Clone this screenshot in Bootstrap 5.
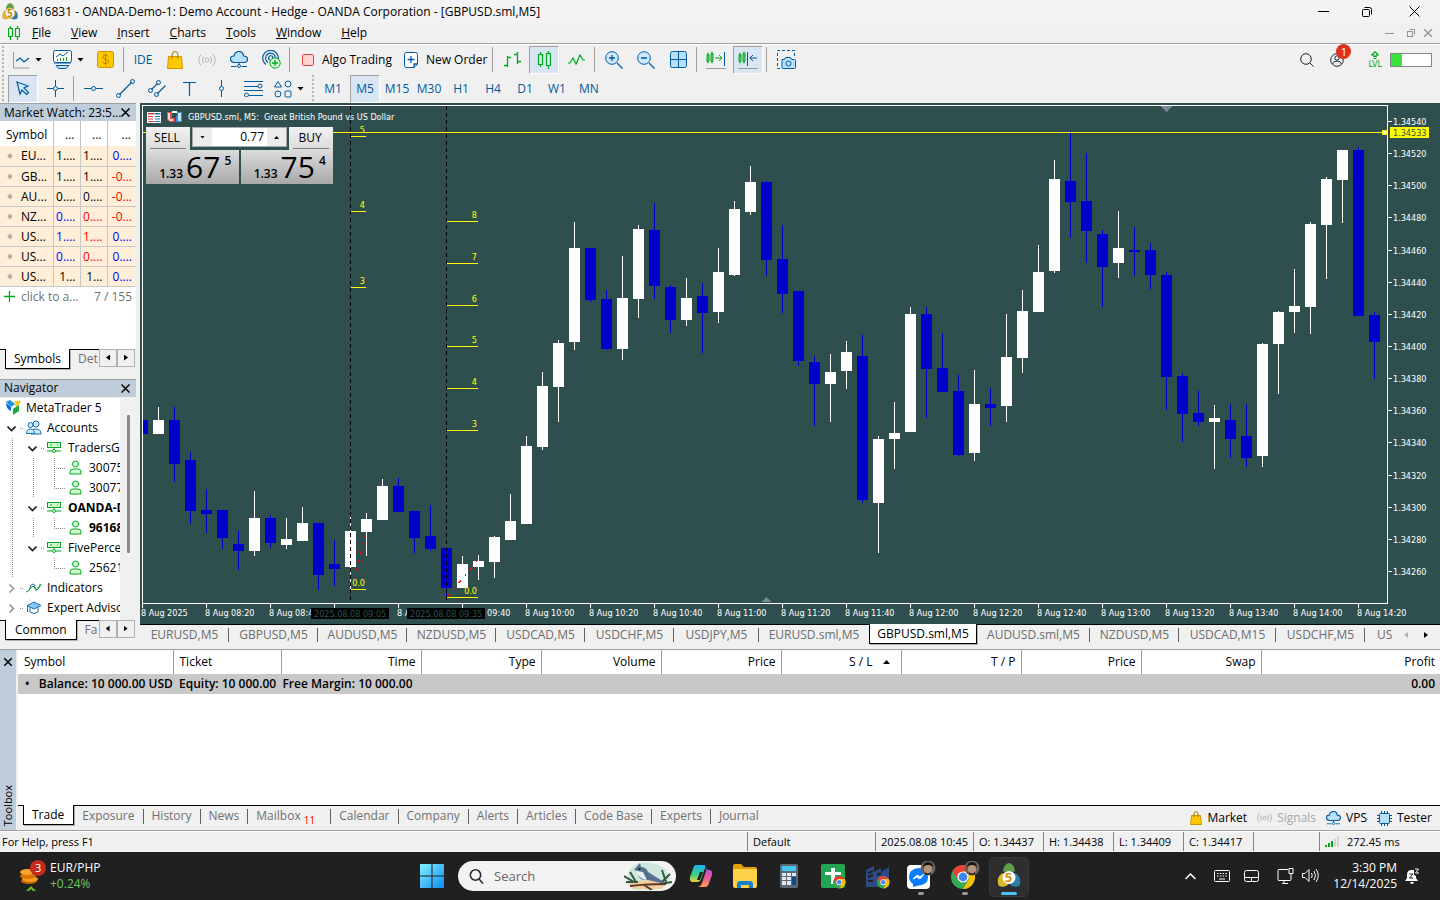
<!DOCTYPE html>
<html lang="en">
<head>
<meta charset="utf-8">
<meta name="viewport" content="width=device-width, initial-scale=1">
<title>9616831 - OANDA-Demo-1: Demo Account</title>
<link href="https://cdn.jsdelivr.net/npm/bootstrap@5.3.0/dist/css/bootstrap.min.css" rel="stylesheet">
<style>
:root{--ink:#005a9e;--grn:#00a81c;--ui:#f0f0f0;--rule:#a0a0a0;--pane:#bfcddb;--chart:#2f4f4f}
body{font:12px/16px "Open Sans","Noto Sans",sans-serif;color:#000;background:var(--ui);overflow:hidden}
button{border:0;background:none;padding:0;color:inherit;white-space:nowrap}
a{color:inherit;text-decoration:none}
svg{display:block;flex:none;fill:none}
svg:not([stroke]){stroke:currentColor}
.app{height:100vh;min-height:700px}
.titlebar{height:23px;background:#f3f3f3}
.menubar{height:20px}
.menubar .menus{gap:20px}
.toolbars{border-top:1px solid var(--rule);box-shadow:inset 0 1px #fff;color:var(--ink);height:60px;padding-top:1px}
.toolrow{height:29px}
.grip{width:2px;height:27px;background:repeating-linear-gradient(#b4b4b4 0 2px,transparent 2px 4px);margin:0 3px 0 2px}
.tb{width:32px;height:28px;display:flex;align-items:center;justify-content:center}
.tb.drop{width:41px;justify-content:flex-start;gap:5px;padding-left:5px}
.tb.pressed{width:30px;margin:0 1px;background:#d9e5f3;border:1px solid;border-color:var(--rule) #fff #fff var(--rule)}
.tb.label{width:auto;gap:8px;color:#000;padding:0 3px 0 9px}
.caret{width:7px;height:4px;background:#000;clip-path:polygon(0 0,100% 0,50% 100%)}
.vsep{width:1px;height:25px;background:var(--rule);margin:0 3px 0 2px}
.note{position:absolute;left:6px;top:-9px;width:15px;height:15px;border-radius:50%;background:#e0301e;color:#fff;font-size:11px;line-height:15px;text-align:center}
.meter{width:42px;height:14px;border:1px solid #848484;background:linear-gradient(90deg,#3ee23e 11px,#fff 11px)}
.side{width:136px;margin-right:4px}
.pane-head{height:18px;border-top:1px solid var(--rule);background:var(--pane);padding:0 6px 0 4px;white-space:nowrap}
.pane-head button{margin-left:-4px}
.watch{table-layout:fixed;width:136px;background:#fff;border-collapse:collapse}
.watch th{height:25px;font-weight:400;border-left:1px solid #c0c0c0;padding:3px 5px 0 0;text-align:right}
.watch td{height:20px;padding:0 4px 0 0;background:#ffeed8;border:1px solid #c8c8c8;border-width:0 0 1px 1px;text-align:right;line-height:19px}
.watch tr>:first-child{border-left:0;text-align:left;padding-left:6px}
.watch tr>td:first-child{padding-left:21px;background:radial-gradient(circle at 10px 10px,#a0a0a0 1px,transparent 3px) #ffeed8}
.up{color:#00f}.dn{color:#f00}
.bottomtabs{height:22px;padding-left:5px}
.btab{height:20px;line-height:18px;border-top:1px solid #000;color:#707070}
.btab.on{background:#fff;color:#000;border:1px solid #000;border-top:0;box-shadow:1px 1px #b0b0b0;line-height:20px}
.lead-line{border-top:1px solid #000;width:5px;height:1px;margin-left:-5px}
.arrowbtn{width:18px;height:18px;border:1px solid #b0b0b0;display:flex;align-items:center;justify-content:center}
.tri-l,.tri-r{width:4px;height:6px;background:#000;clip-path:polygon(100% 0,100% 100%,0 50%)}
.tri-r{clip-path:polygon(0 0,100% 50%,0 100%)}
.tree{width:120px;overflow:hidden;background:#fff;padding-left:2px;min-height:0}
.node{height:20px;white-space:nowrap}
.cell{width:21px;height:20px;flex:none;position:relative}
.cell.v{background:repeating-linear-gradient(#909090 0 1px,transparent 1px 2px) 10px 0/1px 100% no-repeat}
.cell.t{background:repeating-linear-gradient(#909090 0 1px,transparent 1px 2px) 10px 0/1px 100% no-repeat,repeating-linear-gradient(90deg,#909090 0 1px,transparent 1px 2px) 10px 10px/100% 1px no-repeat}
.cell.e{background:repeating-linear-gradient(#909090 0 1px,transparent 1px 2px) 10px 0/1px 10px no-repeat,repeating-linear-gradient(90deg,#909090 0 1px,transparent 1px 2px) 10px 10px/100% 1px no-repeat}
.cell.k{background:repeating-linear-gradient(90deg,#909090 0 1px,transparent 1px 2px) 18px 10px/3px 1px no-repeat}
.slot{width:24px;flex:none;padding-left:3px}
.thumb{width:3px;height:138px;margin:17px 0 0 7px;background:#8a8a8a;border-radius:1px}
.chartpane{background:var(--chart);padding:2px 0 0 2px}
.plot{border:1px solid #fff}
.plot>svg,.axis svg,.times svg{position:absolute;left:0;top:0;width:100%;height:100%;overflow:visible}
.axis{width:52px}
.times{height:20px;margin-right:52px}
.tiny{font:9px/12px "DejaVu Sans Condensed","DejaVu Sans",sans-serif}
svg text{stroke:none;font:9px "DejaVu Sans Condensed","DejaVu Sans",sans-serif}
.caption{position:absolute;left:4px;top:5px;color:#fff;gap:6px}
.deal{position:absolute;left:3px;top:21px;width:187px;background:var(--chart)}
.deal .side-btn{width:44px;height:23px;background:linear-gradient(#f2f2f2,#dadada);position:relative;padding:0 2px 2px 0}
.deal .side-btn::after{content:"";position:absolute;left:4px;right:4px;bottom:1px;height:1px;background:#808080}
.deal .px{height:34px;background:linear-gradient(#dcdcdc,#a8a8a8);display:flex;justify-content:center;align-items:flex-end;line-height:1;padding:0 0 4px 6px}
.deal .px b{font-size:12px;font-weight:600;margin-right:3px}
.deal .px big{font-size:30px;line-height:27px}
.deal .px sup{font-size:12px;font-weight:600;align-self:flex-start;top:5px;margin-left:4px;line-height:12px}
.spin{height:20px;width:95px;border:1px solid #a8a8a8;background:#fff;margin:0 2px}
.spin button{width:19px;background:#ececec;display:flex;align-items:center;justify-content:center}
.spin .caret{width:5px;height:3px}
.spin input{flex:1;min-width:0;border:0;padding:0 3px;text-align:right;outline:0;font-size:12px}
.charttabs{height:25px;border-top:1px solid #000;color:#6d6d6d}
.ct{width:89px;height:20px;text-align:center;position:relative;flex:none;line-height:20px}
.ct::after{content:"";position:absolute;right:0;top:3px;height:14px;border-right:1px solid #606060}
.ct.w85{width:85px}.ct.w97{width:97px}.ct.w110{width:110px}.ct.w113{width:113px}
.ct.on{width:108px;background:#fff;color:#000;border:1px solid #000;border-top:0;margin-top:-1px;box-shadow:1px 1px #b0b0b0}
.ct.on::after,.ct.w110::after{display:none}
.toolbox{height:182px;border:1px solid var(--rule);border-width:1px 0}
.boxhead{width:16px;margin-right:2px;background:var(--pane)}
.boxhead span{writing-mode:vertical-rl;transform:rotate(180deg);font-size:11px}
.trades{table-layout:fixed;width:100%;border-collapse:collapse}
.trades th{font-weight:400;height:24px;border-left:1px solid var(--rule);text-align:right;padding:0 5px 0 6px}
.trades th.s{text-align:left}.trades th:first-child{border-left:0}
.trades td{height:20px;background:#c8c8c8;font-weight:600;padding:0 5px 0 7px}
.boxtabs{height:25px;border-top:1px solid #000;color:#707070;padding-left:5px}
.xt{padding:0 9px 0 8px;height:20px;line-height:18px;position:relative}
.xt+.xt:not(:last-of-type)::after{content:"";position:absolute;right:0;top:3px;height:15px;border-right:1px solid #606060}
.xt.on{background:#fff;color:#000;border:1px solid #000;border-top:0;margin-top:-1px;line-height:20px;box-shadow:1px 1px #b0b0b0}
.services{gap:10px;color:#000;padding-right:8px}
.services a{gap:5px}
.statusbar{height:21px;font-size:11px;box-shadow:inset 0 1px #fff}
.st{height:19px;border-left:1px solid #848484;padding-left:5px;line-height:19px;white-space:nowrap;width:70px;margin-top:1px}
.w128{width:128px}.w98{width:98px}.w66{width:66px}.w121{width:121px}
.taskbar{height:48px;background:#202020;color:#fff;position:relative}
.tk{width:44px;height:46px;display:flex;align-items:center;justify-content:center;position:relative}
.tk.run::after{content:"";position:absolute;bottom:4px;width:6px;height:3px;border-radius:2px;background:#9a9a9a}
.tk.act::before{content:"";position:absolute;inset:4px 2px 2px;background:#2e2e2e;border-radius:5px;border:1px solid #383838}
.tk.act::after{bottom:4px;width:16px;background:#4cc2ff}
.tk svg{position:relative;stroke:none}
.find{width:218px;height:30px;border-radius:15px;background:#f3f3f3;overflow:hidden;margin:0 3px 0 14px;padding-left:11px}
.find input{border:0;background:none;outline:0;width:120px;font-size:13px;color:#555;padding:0 0 0 10px}
.find input::placeholder{color:#666;opacity:1}
.ticker{width:432px;padding-left:18px}
.tray{gap:14px;padding-right:20px}
</style>
</head>
<body>
<div class="app d-flex flex-column">

<header class="titlebar d-flex align-items-center ps-1">
  <svg width="16" height="18" viewBox="0 0 16 18" stroke="none" style="margin-left:-2px"><path d="M8 0c3 1 4 3 4 6H4c0-3 1-5 4-6z" fill="#5f9e4a"/><path d="M4 7C1 8-1 12 1 16c3 1 6 0 7-2z" fill="#e2b42c"/><path d="M12 7c3 1 5 5 3 9-3 1-6 0-7-2z" fill="#2e7da8"/><circle cx="8" cy="10" r="5" fill="#fff" stroke="#d7a83c"/><text x="5" y="14" fill="#c88a12" style="font:bold 10px 'Open Sans'">5</text></svg>
  <span class="flex-grow-1" style="margin-left:6px">9616831 - OANDA-Demo-1: Demo Account - Hedge - OANDA Corporation - [GBPUSD.sml,M5]</span>
  <button aria-label="Minimize" class="me-4"><svg width="11" height="11" viewBox="0 0 11 11"><path d="M0 5.500h11"/></svg></button>
  <button aria-label="Restore" class="ms-2 me-4"><svg width="12" height="12" viewBox="0 0 12 12"><rect x="1.500" y="3.500" width="7" height="7" rx="1"/><path d="M3.500 1.500h5a2 2 0 0 1 2 2v5"/></svg></button>
  <button aria-label="Close" class="ms-2 me-3 ps-1 pe-1"><svg width="11" height="11" viewBox="0 0 11 11"><path d="M.5.5l10 10M10.500.5l-10 10"/></svg></button>
</header>

<nav class="menubar d-flex align-items-center">
  <svg class="ms-2" width="12" height="14" viewBox="0 0 12 14" style="color:var(--grn)"><path d="M.5 2.500h4v8h-4zM7.500 2.500h4v8h-4zM2.500 0v2M2.500 11v3M9.500 0v2M9.500 11v3" stroke-width="1.200"/></svg>
  <div class="menus d-flex flex-grow-1 ms-2 ps-1">
    <a href="#"><u>F</u>ile</a><a href="#"><u>V</u>iew</a><a href="#"><u>I</u>nsert</a><a href="#"><u>C</u>harts</a><a href="#"><u>T</u>ools</a><a href="#"><u>W</u>indow</a><a href="#"><u>H</u>elp</a>
  </div>
  <div class="d-flex gap-2 align-items-center me-2 text-secondary opacity-75">
    <button aria-label="Minimize chart" class="me-1"><svg width="9" height="9" viewBox="0 0 9 9"><path d="M0 4.500h9"/></svg></button>
    <button aria-label="Restore chart"><svg width="10" height="10" viewBox="0 0 10 10"><rect x="1.500" y="3.500" width="5" height="5"/><path d="M3.500 1.500h5v5"/></svg></button>
    <button aria-label="Close chart"><svg width="8" height="8" viewBox="0 0 8 8"><path d="M0 0l8 8M8 0l-8 8" stroke-width="1.400"/></svg></button>
  </div>
</nav>

<div class="toolbars">
  <div class="toolrow d-flex align-items-center pe-2">
    <div class="grip"></div>
    <button class="tb drop" aria-label="New chart"><svg width="18" height="18" viewBox="0 0 18 18"><path d="M1.500 1v16h16" stroke="#9a9a9a"/><path d="M4 10l4-3 4 4 5-4" stroke-width="1.300"/></svg><i class="caret"></i></button>
    <button class="tb drop" aria-label="Profiles"><svg width="19" height="19" viewBox="0 0 19 19"><rect x=".5" y=".5" width="18" height="12" rx="2" fill="#fff"/><path d="M3 7l4-3 3 2 5-4" /><path d="M4.500 11V9M7.500 11V8M10.500 11V8M13.500 11V7" stroke="#00a81c"/><path d="M1 13h17M3 15.500h13l-1 1q-1 2-3 2H7q-2 0-3-2z" fill="#cde6fb"/></svg><i class="caret"></i></button>
    <button class="tb" aria-label="Deposit"><svg width="17" height="17" viewBox="0 0 17 17"><rect x=".5" y=".5" width="16" height="16" rx="2" fill="#ffc800" stroke="#d09500"/><path d="M11.500 5.500q-1-1.500-3-1.500-2.500 0-2.500 2 0 1.800 2.500 2.200 3 .5 3 2.300 0 2-3 2-2.500 0-3-1.500M8.500 2.500v12" stroke="#b98400"/></svg></button>
    <div class="vsep"></div>
    <button class="tb">IDE</button>
    <button class="tb" aria-label="Market"><svg width="16" height="18" viewBox="0 0 16 18"><path d="M1.500 5.500h13l1 12H.5z" fill="#ffc800" stroke="#d09500"/><path d="M5 8V4q0-3.500 3-3.500T11 4v4" stroke="#a87800"/></svg></button>
    <button class="tb" aria-label="Signals"><svg width="18" height="12" viewBox="0 0 18 12" stroke="#b4b4b4"><circle cx="9" cy="6" r="2"/><path d="M5.500 2.500q-2.500 3.500 0 7M12.500 2.500q2.500 3.500 0 7M3 .5q-4.500 5.500 0 11M15 .5q4.500 5.500 0 11"/></svg></button>
    <button class="tb" aria-label="VPS"><svg width="18" height="17" viewBox="0 0 18 17"><path d="M4 11.500Q.5 11 .5 8T4 5Q5 .5 9 .5T13.500 5q4 0 4 3.200T14 11.500z" fill="#b9e0fb" stroke-width="1.200"/><path d="M9 12v2M1 15.500h5.500M11.500 15.500H17"/><circle cx="9" cy="15" r="1.500"/></svg></button>
    <button class="tb" aria-label="Copy trading"><svg width="19" height="19" viewBox="0 0 19 19"><path d="M4 14.500A7.800 7.800 0 1 1 16.300 9M6 12.500A5 5 0 1 1 13.500 8M8 10a2.200 2.200 0 1 1 3-2" stroke-width="1.200"/><circle cx="13" cy="13" r="5.200" fill="#d6ffd8" stroke="#00a81c"/><path d="M13 10v6M10 13h6" stroke="#00a81c" stroke-width="1.300"/></svg></button>
    <div class="vsep"></div>
    <button class="tb label"><svg width="12" height="12" viewBox="0 0 12 12"><rect x=".5" y=".5" width="11" height="11" rx="1" fill="#ffd3cf" stroke="#d8453c"/></svg>Algo Trading</button>
    <button class="tb label"><svg width="14" height="16" viewBox="0 0 14 16" stroke="#005a9e"><path d="M2.500.5h9q2 0 2 2V12l-3.500 3.500H2.500q-2 0-2-2v-11q0-2 2-2z" fill="#fff"/><path d="M10 15.500V12h3.500M7 4v7M3.500 7.500h7" stroke-width="1.300"/></svg>New Order</button>
    <div class="vsep"></div>
    <button class="tb" aria-label="Bar chart" style="color:var(--grn)"><svg width="17" height="17" viewBox="0 0 17 17"><path d="M3.500 5v11M0 14.500h3.500M3.500 6.500H7M13.500 1v12M10 3.500h3.500M13.500 10.500H17" stroke-width="1.300"/></svg></button>
    <button class="tb pressed" aria-label="Candlesticks" style="color:var(--grn)"><svg width="14" height="18" viewBox="0 0 14 18"><path d="M1.500 3.500h4v10h-4zM9.500 2.500h4v12h-4zM3.500 1v2M3.500 14v2M11.500 0v2M11.500 15v3" stroke-width="1.200"/></svg></button>
    <button class="tb" aria-label="Line chart" style="color:var(--grn)"><svg width="17" height="12" viewBox="0 0 17 12"><path d="M0 9h2l3-5 3 6 4-9 3 5h2" stroke-width="1.200"/></svg></button>
    <div class="vsep"></div>
    <button class="tb" aria-label="Zoom in"><svg width="18" height="18" viewBox="0 0 18 18"><circle cx="7" cy="7" r="6.300" fill="#cfe9fd"/><path d="M12 12l5.500 5.500M4 7h6M7 4v6" stroke-width="1.300"/></svg></button>
    <button class="tb" aria-label="Zoom out"><svg width="18" height="18" viewBox="0 0 18 18"><circle cx="7" cy="7" r="6.300" fill="#cfe9fd"/><path d="M12 12l5.500 5.500M4 7h6" stroke-width="1.300"/></svg></button>
    <button class="tb" aria-label="Tile windows"><svg width="17" height="17" viewBox="0 0 17 17"><rect x=".5" y=".5" width="16" height="16" rx="2" fill="#b9e0fb"/><path d="M8.500 0v17M0 8.500h17"/></svg></button>
    <div class="vsep"></div>
    <button class="tb" aria-label="Auto scroll"><svg width="20" height="18" viewBox="0 0 20 18"><path d="M1 3.500h2v7H1zM5 2.500h2v8H5zM2 1.500v11M6 .5v12M9 7h7M13 4l3 3-3 3" stroke="#00a81c"/><path d="M18.500 1v14"/><path d="M0 17.500h20" stroke="#9a9a9a"/></svg></button>
    <button class="tb pressed" aria-label="Chart shift"><svg width="20" height="18" viewBox="0 0 20 18"><path d="M1 3.500h2v7H1zM5 2.500h2v8H5zM2 1.500v11M6 .5v12" stroke="#00a81c"/><path d="M9.500 1v14M12 7h7M15 4l-3 3 3 3"/><path d="M0 17.500h20" stroke="#9a9a9a"/></svg></button>
    <div class="vsep"></div>
    <button class="tb" aria-label="Screenshot"><svg width="20" height="20" viewBox="0 0 20 20"><path d="M4 18.500H1.500V.5h17V7" stroke-dasharray="3 2"/><path d="M6 9.500h2.500l1-2h5l1 2h3q1 0 1 1v7q0 1-1 1H7q-1 0-1-1z" fill="#b9e0fb"/><circle cx="12.500" cy="13.500" r="2.500"/></svg></button>
    <div class="d-flex align-items-center ms-auto text-dark">
      <button aria-label="Search" class="me-3"><svg width="14" height="14" viewBox="0 0 14 14"><circle cx="6" cy="6" r="5.300"/><path d="M10 10l3.500 3.500"/></svg></button>
      <button aria-label="Account" class="position-relative me-3"><svg width="14" height="14" viewBox="0 0 14 14"><circle cx="7" cy="7" r="6.300"/><circle cx="7" cy="5" r="2.200"/><path d="M2.500 11q1-3 4.500-3t4.500 3"/></svg><span class="note">1</span></button>
      <button aria-label="Level" class="d-flex flex-column align-items-center ms-2 me-2" style="color:var(--grn)"><svg width="8" height="9" viewBox="0 0 8 9"><path d="M4 .7L.7 4H2.800v1.500H5.200V4H7.300zM2.500 7.500h3" stroke-width="1.200"/></svg><span class="tiny" style="line-height:8px">LVL</span></button>
      <div class="meter"></div>
    </div>
  </div>
  <div class="toolrow d-flex align-items-center">
    <div class="grip"></div>
    <button class="tb pressed" aria-label="Cursor"><svg width="14" height="15" viewBox="0 0 14 15"><path d="M1 1l11 4-4 2 4.500 4.500-2 2L6 9l-2 4z" fill="#cfe9fd" stroke-width="1.200"/></svg></button>
    <button class="tb" aria-label="Crosshair"><svg width="17" height="17" viewBox="0 0 17 17"><path d="M8.500 0v6M8.500 11v6M0 8.500h6M11 8.500h6"/><circle cx="8.500" cy="8.500" r="2"/></svg></button>
    <div class="vsep"></div>
    <button class="tb" aria-label="Horizontal line"><svg width="19" height="5" viewBox="0 0 19 5"><path d="M0 2.500h7M12 2.500h7"/><circle cx="9.500" cy="2.500" r="2"/></svg></button>
    <button class="tb" aria-label="Trend line"><svg width="19" height="19" viewBox="0 0 19 19"><path d="M3.500 15.500l12-12" stroke-width="1.200"/><circle cx="2.500" cy="16.500" r="2"/><circle cx="16.500" cy="2.500" r="2"/></svg></button>
    <button class="tb" aria-label="Channel"><svg width="19" height="17" viewBox="0 0 19 17"><path d="M3.500 9.500l6-6M9.500 13.500l8-8" stroke-width="1.200"/><circle cx="2.500" cy="10.500" r="2"/><circle cx="10.500" cy="2.500" r="2"/><circle cx="8.500" cy="14.500" r="2"/></svg></button>
    <button class="tb" aria-label="Text"><svg width="13" height="14" viewBox="0 0 13 14"><path d="M0 .5h13M6.500 0v14" stroke-width="1.200"/></svg></button>
    <button class="tb" aria-label="Vertical line"><svg width="5" height="17" viewBox="0 0 5 17"><path d="M2.500 0v6M2.500 11v6"/><circle cx="2.500" cy="8.500" r="2"/></svg></button>
    <button class="tb" aria-label="Fibonacci"><svg width="19" height="17" viewBox="0 0 19 17"><path d="M0 1.500h19M0 6.500h14M0 10.500h19M5 15.500h14"/><circle cx="16" cy="6" r="2"/><circle cx="2.500" cy="15" r="2"/></svg></button>
    <button class="tb drop" aria-label="Objects"><svg width="18" height="18" viewBox="0 0 18 18"><path d="M4 1.500L7.500 7h-7z"/><circle cx="14" cy="4" r="3"/><circle cx="4" cy="14" r="3"/><rect x="11" y="11" width="6" height="6" rx="1"/></svg><i class="caret"></i></button>
    <div class="grip"></div>
    <button class="tb">M1</button><button class="tb pressed">M5</button><button class="tb">M15</button><button class="tb">M30</button><button class="tb">H1</button><button class="tb">H4</button><button class="tb">D1</button><button class="tb">W1</button><button class="tb">MN</button>
  </div>
</div>

<main class="d-flex flex-grow-1" style="min-height:0">
  <aside class="side d-flex flex-column">
    <div class="pane-head d-flex align-items-center justify-content-between"><span>Market Watch: 23:5...</span><button aria-label="Close Market Watch"><svg width="9" height="9" viewBox="0 0 9 9"><path d="M.5.5l8 8M8.500.5l-8 8" stroke-width="1.500"/></svg></button></div>
    <table class="watch">
      <colgroup><col style="width:53px"><col style="width:27px"><col style="width:27px"><col style="width:29px"></colgroup>
      <thead><tr><th>Symbol</th><th>...</th><th>...</th><th>...</th></tr></thead>
      <tbody>
        <tr><td>EU...</td><td>1....</td><td>1....</td><td class="up">0....</td></tr>
        <tr><td>GB...</td><td>1....</td><td>1....</td><td class="dn">-0...</td></tr>
        <tr><td>AU...</td><td>0....</td><td>0....</td><td class="dn">-0...</td></tr>
        <tr><td>NZ...</td><td class="up">0....</td><td class="dn">0....</td><td class="dn">-0...</td></tr>
        <tr><td>US...</td><td class="up">1....</td><td class="dn">1....</td><td class="up">0....</td></tr>
        <tr><td>US...</td><td class="up">0....</td><td class="dn">0....</td><td class="up">0....</td></tr>
        <tr><td>US...</td><td>1...</td><td>1...</td><td class="up">0....</td></tr>
      </tbody>
    </table>
    <div class="bg-white d-flex px-1 pt-1" style="height:62px;color:#707070"><svg width="11" height="11" viewBox="0 0 11 11" stroke="#00a81c" style="margin-right:6px"><path d="M5.500 0v11M0 5.500h11" stroke-width="1.300"/></svg><span class="flex-grow-1 lh-1">click to a...</span><span class="lh-1">7 / 155</span></div>
    <div class="bottomtabs d-flex"><i class="lead-line"></i><button class="btab on px-2">Symbols</button><button class="btab ps-2 overflow-hidden text-start" style="width:29px">Det</button><button class="arrowbtn" aria-label="Left"><i class="tri-l"></i></button><button class="arrowbtn" aria-label="Right"><i class="tri-r"></i></button></div>

    <div class="pane-head d-flex align-items-center justify-content-between mt-2"><span>Navigator</span><button aria-label="Close Navigator"><svg width="9" height="9" viewBox="0 0 9 9"><path d="M.5.5l8 8M8.500.5l-8 8" stroke-width="1.500"/></svg></button></div>
    <div class="d-flex" style="height:223px;padding-top:1px">
      <div class="tree" id="tree"></div>
      <div class="thumb"></div>
    </div>
    <div class="bottomtabs d-flex"><i class="lead-line"></i><button class="btab on" style="padding:0 9px">Common</button><button class="btab ps-2 overflow-hidden text-start" style="width:22px">Fa</button><button class="arrowbtn" aria-label="Left"><i class="tri-l"></i></button><button class="arrowbtn" aria-label="Right"><i class="tri-r"></i></button></div>
  </aside>

  <section class="d-flex flex-column flex-grow-1" style="min-width:0">
    <div class="chartpane flex-grow-1 d-flex flex-column">
      <div class="d-flex flex-grow-1">
        <div class="plot flex-grow-1 position-relative">
          <svg id="plot"></svg>
          <div class="caption d-flex align-items-center">
            <svg width="14" height="11" viewBox="0 0 14 11" stroke="none"><path d="M0 0h14v11H0z" fill="#fff"/><path d="M1 1h6v1.500H1zM1 4h5v1H1zM1 6.500h5v1H1zM1 9h6v1H1z" fill="#d83a34"/><path d="M7.500 1h6v1.500h-6zM8 4h5v1H8zM8 6.500h5v1H8zM7.500 9h6v1h-6z" fill="#1874c4"/></svg>
            <svg width="15" height="12" viewBox="0 0 15 12" stroke="none"><path d="M0 1h5v6h3v4H3L0 9z" fill="#e8544c"/><path d="M1 2h2v6h3v2H3L1 8z" fill="#ffd9d6"/><path d="M5 0h5v2H5z" fill="#fff"/><path d="M10 1h5v10H9V5h1z" fill="#2f8fdc"/><path d="M11 2h3v8h-3z" fill="#bfe2ff"/></svg>
            <span class="tiny">GBPUSD.sml, M5:&nbsp; Great British Pound vs US Dollar</span>
          </div>
          <div class="deal">
            <div class="d-flex">
              <button class="side-btn">SELL</button>
              <div class="spin d-flex"><button aria-label="Less"><i class="caret"></i></button><input aria-label="Volume" value="0.77"><button aria-label="More"><i class="caret" style="transform:rotate(180deg)"></i></button></div>
              <button class="side-btn">BUY</button>
            </div>
            <div class="d-flex" style="gap:2px">
              <button class="px flex-fill"><b>1.33</b><big>67</big><sup>5</sup></button>
              <button class="px flex-fill"><b>1.33</b><big>75</big><sup>4</sup></button>
            </div>
          </div>
        </div>
        <div class="axis position-relative"><svg id="prices"></svg></div>
      </div>
      <div class="times position-relative"><svg id="times"></svg></div>
    </div>
    <div class="charttabs d-flex">
      <button class="ct">EURUSD,M5</button><button class="ct">GBPUSD,M5</button><button class="ct">AUDUSD,M5</button><button class="ct">NZDUSD,M5</button><button class="ct">USDCAD,M5</button><button class="ct">USDCHF,M5</button><button class="ct w85">USDJPY,M5</button><button class="ct w110">EURUSD.sml,M5</button><button class="ct on">GBPUSD.sml,M5</button><button class="ct w113">AUDUSD.sml,M5</button><button class="ct">NZDUSD,M5</button><button class="ct w97">USDCAD,M15</button><button class="ct">USDCHF,M5</button><button class="ps-2 ms-1 pb-1">US</button>
      <div class="d-flex align-items-center ms-auto gap-3 me-2 pb-1"><button aria-label="Previous tabs"><i class="tri-l d-block opacity-25"></i></button><button aria-label="Next tabs" class="me-1"><i class="tri-r d-block"></i></button></div>
    </div>
  </section>
</main>

<section class="toolbox d-flex">
  <div class="boxhead d-flex flex-column align-items-center justify-content-between py-1"><button class="mt-1" aria-label="Close Toolbox"><svg width="8" height="8" viewBox="0 0 8 8"><path d="M0 0l8 8M8 0l-8 8" stroke-width="1.500"/></svg></button><span>Toolbox</span></div>
  <div class="flex-grow-1 d-flex flex-column">
    <div class="bg-white flex-grow-1">
      <table class="trades">
        <colgroup><col style="width:155px"><col style="width:108px"><col style="width:140px"><col style="width:120px"><col style="width:120px"><col style="width:120px"><col style="width:120px"><col style="width:120px"><col style="width:120px"><col style="width:120px"><col></colgroup>
        <thead><tr><th class="s">Symbol</th><th class="s">Ticket</th><th>Time</th><th>Type</th><th>Volume</th><th>Price</th><th><span class="d-inline-flex align-items-center" style="gap:10px">S / L <i class="caret" style="transform:rotate(180deg);margin-right:6px"></i></span></th><th>T / P</th><th>Price</th><th>Swap</th><th>Profit</th></tr></thead>
        <tbody><tr><td colspan="10">•&nbsp;&nbsp; Balance: 10 000.00 USD&nbsp; Equity: 10 000.00&nbsp; Free Margin: 10 000.00</td><td class="text-end">0.00</td></tr></tbody>
      </table>
    </div>
    <div class="boxtabs d-flex">
      <button class="xt on">Trade</button><button class="xt">Exposure</button><button class="xt">History</button><button class="xt">News</button><button class="xt pe-3">Mailbox <small class="dn position-relative" style="font-size:10px;top:4px">11</small></button><button class="xt">Calendar</button><button class="xt">Company</button><button class="xt">Alerts</button><button class="xt">Articles</button><button class="xt">Code Base</button><button class="xt">Experts</button><button class="xt">Journal</button>
      <div class="services d-flex align-items-center ms-auto">
        <a href="#" class="d-flex align-items-center"><svg width="12" height="14" viewBox="0 0 12 14"><path d="M1.500 4.500h9l1 9H.5z" fill="#ffc800" stroke="#d09500"/><path d="M4 6V3q0-2.500 2-2.500T8 3v3" stroke="#a87800"/></svg>Market</a>
        <a href="#" class="d-flex align-items-center" style="color:#a8a8a8"><svg width="15" height="10" viewBox="0 0 18 12"><circle cx="9" cy="6" r="2"/><path d="M5.500 2.500q-2.500 3.500 0 7M12.500 2.500q2.500 3.500 0 7M3 .5q-4.500 5.500 0 11M15 .5q4.500 5.500 0 11"/></svg>Signals</a>
        <a href="#" class="d-flex align-items-center"><svg width="15" height="14" viewBox="0 0 18 17" stroke="#005a9e"><path d="M4 11.500Q.5 11 .5 8T4 5Q5 .5 9 .5T13.500 5q4 0 4 3.200T14 11.500z" fill="#b9e0fb" stroke-width="1.300"/><path d="M9 12v2M1 15.500h5.500M11.500 15.500H17"/><circle cx="9" cy="15" r="1.500"/></svg>VPS</a>
        <a href="#" class="d-flex align-items-center"><svg width="15" height="15" viewBox="0 0 15 15" stroke="#005a9e"><path d="M4.500 0v15M7.500 0v15M10.500 0v15M0 4.500h15M0 7.500h15M0 10.500h15"/><rect x="2.500" y="2.500" width="10" height="10" rx="1" fill="#b9e0fb"/></svg>Tester</a>
      </div>
    </div>
  </div>
</section>

<footer class="statusbar d-flex">
  <span class="flex-grow-1" style="padding:3px 2px">For Help, press F1</span>
  <span class="st w128">Default</span><span class="st w98">2025.08.08 10:45</span><span class="st">O: 1.34437</span><span class="st">H: 1.34438</span><span class="st">L: 1.34409</span><span class="st">C: 1.34417</span><span class="st w66"></span>
  <span class="st w121 d-flex align-items-center gap-2"><svg width="14" height="11" viewBox="0 0 14 11" stroke-width="2"><path d="M1 11V9M4 11V7M7 11V5" stroke="#00a81c"/><path d="M10 11V3M13 11V0" stroke="#d4d4d4"/></svg>272.45 ms</span>
</footer>

<div class="taskbar d-flex align-items-center">
  <div class="ticker d-flex align-items-center flex-grow-0">
    <svg width="28" height="32" viewBox="0 0 28 32" stroke="none"><ellipse cx="11" cy="21" rx="8" ry="3" fill="#c86400"/><ellipse cx="12" cy="19" rx="8" ry="3" fill="#f79a1e"/><ellipse cx="10" cy="16" rx="8" ry="3" fill="#d97706"/><ellipse cx="9" cy="12" rx="7" ry="3" fill="#f7a52e"/><path d="M8 31l5-5 5 5h-3l-2-2-2 2z" fill="#6cb81e"/><circle cx="20" cy="8" r="8" fill="#c42b1c"/><text x="17" y="12" fill="#fff" style="font:11px 'Open Sans'">3</text></svg>
    <div class="ms-1"><div>EUR/PHP</div><div style="color:#6ccb5f">+0.24%</div></div>
  </div>
  <button aria-label="Start" style="margin-left:-12px"><svg width="24" height="24" viewBox="0 0 24 24" stroke="none"><defs><linearGradient id="win" x2="1" y2="1"><stop stop-color="#86f2ff"/><stop offset="1" stop-color="#0a8cf5"/></linearGradient></defs><path d="M0 0h11.500v11.500H0zM12.500 0H24v11.500H12.500zM0 12.500h11.500V24H0zM12.500 12.500H24V24H12.500z" fill="url(#win)"/></svg></button>
  <label class="find d-flex align-items-center">
    <svg width="15" height="15" viewBox="0 0 15 15" stroke="#2b2b2b" stroke-width="1.600"><circle cx="6.500" cy="6" r="5.200"/><path d="M10 10l4 4.500"/></svg>
    <input type="text" placeholder="Search" aria-label="Search">
    <svg class="ms-auto me-1" width="48" height="28" viewBox="0 0 48 28" stroke="none"><path d="M10 3q14-6 30 3 8 8 4 16-14 10-36 5Q-2 16 10 3z" fill="#cfe6dc"/><path d="M4 23q18-8 40-3l-6 7H10z" fill="#f4cfa6"/><path d="M0 14l10 6M2 20l12 0M6 10l6 10M38 8l4 12M46 12l-8 8M48 20l-12 2" stroke="#35573e" stroke-width="2"/><path d="M6 24q16-2 36-2M20 23l8 5" stroke="#5d3b24" stroke-width="2"/><path d="M10 8l6-7 1 4q5 0 7 5l16 10-3 1-13-3q-11 1-10-9z" fill="#54708f"/><path d="M13 9q1 8 10 9l-4-8z" fill="#e9eef2"/><circle cx="15.500" cy="7" r="1" fill="#111"/></svg>
  </label>
  <button class="tk" aria-label="Copilot"><svg width="24" height="24" viewBox="0 0 24 24"><defs><linearGradient id="ca" y2="1" x2="0"><stop stop-color="#19b6f2"/><stop offset=".6" stop-color="#3fcf7e"/><stop offset="1" stop-color="#f5d13a"/></linearGradient><linearGradient id="cb" y2="1" x2="0"><stop stop-color="#8a5cf6"/><stop offset=".5" stop-color="#e455a6"/><stop offset="1" stop-color="#ff9a50"/></linearGradient></defs><path d="M7 1h8q2 0 1 3l-4 11q-1 3-4 3H4q-4 0-3-5l3-8q1-4 3-4z" fill="url(#ca)"/><path d="M14 1l2 .5Q17 6 20 6q4 0 3 5l-3 8q-1 4-4 4H9q3-1 4-4l4-12q0-4-3-6z" fill="url(#cb)"/><path d="M11 8h3l-3 8H8z" fill="#202020"/></svg></button>
  <button class="tk" aria-label="File Explorer"><svg width="24" height="24" viewBox="0 0 24 24"><path d="M0 2q0-2 2-2h6l3 3h11q2 0 2 2v4H0z" fill="#e3a008"/><path d="M0 6q0-1 1-1h22q1 0 1 1v16q0 2-2 2H2q-2 0-2-2z" fill="#ffd04a"/><path d="M4 24v-4q0-3 3-3h10q3 0 3 3v4h-4v-3H8v3z" fill="#1b7fd0"/></svg></button>
  <button class="tk" aria-label="Calculator"><svg width="18" height="26" viewBox="0 0 18 24"><rect width="18" height="24" rx="2" fill="#5c6a78"/><rect x="2" y="2" width="14" height="5" fill="#46c6f2"/><path d="M2 9h4v3H2zM7 9h4v3H7zM12 9h4v3h-4zM2 13h4v3H2zM7 13h4v3H7zM2 17h4v4H2zM7 17h4v4H7z" fill="#e3e8ed"/><path d="M12 13h4v8h-4z" fill="#0c4a8c"/></svg></button>
  <button class="tk" aria-label="Sheets"><svg width="25" height="25" viewBox="0 0 25 25"><rect width="24" height="24" rx="2" fill="#23a455"/><path d="M4 8h16v3H4zM10 4h4v16h-4z" fill="#fff"/><use href="#chr" transform="translate(12 12) scale(.52)"/></svg></button>
  <button class="tk" aria-label="Web app"><svg width="25" height="25" viewBox="0 0 25 25"><path d="M1 6l8-4v6l7-4v4l8-5v20H1z" fill="#2b4a86"/><path d="M3 9l5-2M3 13l5-2M12 11l4-2M3 17h5" stroke="#202020" stroke-width="2"/><use href="#chr" transform="translate(12 12) scale(.52)"/></svg></button>
  <button class="tk run" aria-label="Messenger"><svg width="30" height="30" viewBox="0 0 30 30"><rect x="1" y="4" width="23" height="24" rx="4" fill="#fff"/><path d="M12.500 7Q22 8 22 16t-9.500 8.500L7 26v-3Q3 20 3 16q0-8 9.500-9z" fill="#0a7cff"/><path d="M7 18l4-4 3 2 4-3-4 5-3-2z" fill="#fff" stroke="#fff"/><use href="#face"/></svg></button>
  <button class="tk run" aria-label="Chrome"><svg width="30" height="30" viewBox="0 0 30 30"><defs>
    <g id="chr"><circle cx="12" cy="12" r="12" fill="#34a853"/><path d="M1.600 6A12 12 0 0 1 22.400 6H12L7 15z" fill="#ea4335"/><path d="M22.400 6A12 12 0 0 1 12 24l5.500-9Q18 9 12 6z" fill="#fbbc05"/><circle cx="12" cy="12" r="5.600" fill="#fff"/><circle cx="12" cy="12" r="4.400" fill="#4285f4"/></g>
    <g id="face"><circle cx="22" cy="7" r="7.500" fill="#6b625c"/><ellipse cx="22" cy="8" rx="4" ry="5.500" fill="#b8937b"/><path d="M17 7q0-6 5-6t5 6q-1-3-5-3t-5 3zM19 11q3 3 6 0v2q-3 2-6 0z" fill="#1a1614"/></g></defs>
    <use href="#chr" transform="translate(1 4)"/><use href="#face"/></svg></button>
  <button class="tk run act" aria-label="MetaTrader"><svg width="24" height="26" viewBox="0 0 16 18"><path d="M8 0c3 1 4 3 4 6H4c0-3 1-5 4-6z" fill="#5f9e4a"/><path d="M4 7C1 8-1 12 1 16c3 1 6 0 7-2z" fill="#d8b92c"/><path d="M12 7c3 1 5 5 3 9-3 1-6 0-7-2z" fill="#2e7da8"/><circle cx="8" cy="10" r="4.500" fill="#fff"/><text x="5" y="13" fill="#d9920f" style="font:bold 9px 'Open Sans'">5</text></svg></button>
  <div class="tray d-flex align-items-center ms-auto">
    <button aria-label="Hidden icons"><svg width="11" height="7" viewBox="0 0 11 7" stroke-width="1.500"><path d="M.5 6l5-5 5 5"/></svg></button>
    <button aria-label="Keyboard" class="ms-1"><svg width="16" height="12" viewBox="0 0 16 12"><rect x=".5" y=".5" width="15" height="11" rx="1"/><path d="M3 3.500h10M3 6h10" stroke-dasharray="1.500 1.300"/><path d="M5 9h6"/></svg></button>
    <button aria-label="Touchpad"><svg width="15" height="12" viewBox="0 0 15 12"><rect x=".5" y=".5" width="14" height="11" rx="2"/><path d="M.5 7.500h14M7.500 7.500v4"/></svg></button>
    <div class="d-flex gap-2 ms-1"><svg width="17" height="17" viewBox="0 0 17 17"><path d="M11 1.500H2q-1 0-1 1v9q0 1 1 1h11q1 0 1-1V9M5 15.500h6M7 12.500v3M12 .5h4v5h-4zM14 5.500V9"/></svg>
    <svg width="17" height="15" viewBox="0 0 17 15"><path d="M.5 5.500h2.500L7 1.500v12L3 9.500H.5zM9.500 5q1.500 2.500 0 5M12 3q3 4.500 0 9M14 1q4.500 6.500 0 13"/></svg></div>
    <div class="text-end">3:30 PM<br>12/14/2025</div>
    <button aria-label="Notifications" style="margin-left:-6px"><svg width="15" height="16" viewBox="0 0 15 16" stroke="none"><path d="M6.500 2Q2 2 2 7v3l-2 3h13l-2-3V8L9 7V2zM5 14h4q-.5 2-2 2T5 14z" fill="#fff"/><path d="M4.500 6H8L4.500 10H8M9.500 1.500h3.500L9.500 6H13" stroke="#202020" fill="none"/><path d="M10 1h3.500L10.500 5H14" stroke="#fff"/></svg></button>
  </div>
</div>
</div>

<script src="https://cdn.jsdelivr.net/npm/bootstrap@5.3.0/dist/js/bootstrap.bundle.min.js"></script>
<script>
// [direction, high, body top, body bottom, low]; one five-minute candle every 16px
const bars = [
 ['b',420,420,434,434],['w',407,420,434,434],['b',407,420,464,482],['b',452,460,511,524],['b',489,510,514,533],['b',510,510,538,549],['b',531,544,551,570],['w',491,518,551,556],
 ['b',515,518,543,548],['w',518,539,545,549],['w',507,523,541,541],['b',523,523,575,590],['b',540,564,569,586],['w',517,531,567,590],['w',513,519,532,556],['w',479,486,520,520],
 ['b',478,486,512,512],['b',511,511,538,553],['b',505,536,549,551],['b',548,548,588,598],['w',556,564,588,588],['w',555,561,567,580],['w',536,537,562,578],['w',494,521,540,540],
 ['w',436,446,524,524],['w',372,386,447,450],['w',340,343,387,422],['w',222,248,342,350],['b',248,248,300,302],['b',290,299,349,350],['w',256,298,349,360],['w',225,229,299,318],
 ['b',203,230,286,299],['b',285,287,320,333],['w',278,298,320,326],['b',283,296,313,353],['w',248,272,312,323],['w',201,209,275,276],['w',166,182,212,215],['b',181,182,260,276],
 ['b',225,259,294,313],['b',291,291,361,366],['b',356,362,384,426],['w',354,372,384,422],['w',341,352,371,389],['b',335,356,500,503],['w',436,439,503,553],['w',402,433,439,469],
 ['w',307,314,432,432],['b',307,314,369,418],['b',333,368,392,392],['b',375,391,455,456],['w',370,404,453,461],['b',388,404,408,426],['w',314,357,406,422],['w',290,311,358,373],
 ['w',245,272,312,312],['w',160,179,271,273],['b',131,181,202,238],['b',153,201,231,263],['b',230,234,267,307],['w',211,248,263,278],['b',227,250,252,276],['b',243,250,275,289],
 ['b',272,275,377,410],['b',373,376,414,442],['b',391,413,422,426],['w',405,418,422,469],['b',404,420,439,458],['b',404,436,458,467],['w',343,344,456,467],['w',311,312,344,394],
 ['w',269,306,312,333],['w',222,224,307,334],['w',177,179,225,279],['w',150,150,180,223],['b',147,150,316,316],['b',312,315,342,379]];
const rect=(x,y,w,h,f)=>`<rect x="${x}" y="${y}" width="${w}" height="${h}" fill="${f}" stroke="none"/>`;
let s='<defs><clipPath id="edge"><rect x="143" y="106" width="4000" height="497"/></clipPath></defs><g transform="translate(-143 -106)"><g clip-path="url(#edge)" shape-rendering="crispEdges">';
bars.forEach(([d,h,a,b,l],i)=>{const x=142+16*i,c=d==='w'?'#fff':'#0000cd';
  s+=rect(x,h,1,l-h,c)+rect(x-5,a,11,b-a,c);});
for(const x of [350,446]) s+=`<path d="M${x+.5} 106V602" stroke="#000" stroke-dasharray="4 3"/>`;
s+='<path d="M351 589L366 532M447 597L478 560" stroke="#f00" stroke-dasharray="4 6 2 6"/>';
s+=rect(143,132,1239,1,'#ff0')+rect(1382,130,5,5,'#ff0')+rect(1383,131,3,3,'#fff');
s+='<path d="M1161 106h11l-5.500 6zM761 602h11l-5.500-5z" fill="#778899" stroke="none"/>';
const tx=(x,y,t,f,a='end')=>`<text x="${x}" y="${y}" fill="${f}" text-anchor="${a}">${t}</text>`;
for(const [y,t] of [[136,5],[211,4],[287,3],[589,'0.0']]) s+=rect(351,y,15,1,'#ff0')+tx(365,y-3,t,'#ff0');
for(const [y,t] of [[221,8],[263,7],[305,6],[346,5],[388,4],[430,3],[597,'0.0']]) s+=rect(447,y,31,1,'#ff0')+tx(477,y-3,t,'#ff0');
document.getElementById('plot').innerHTML=s+'</g></g>';

s='<g shape-rendering="crispEdges" transform="translate(-1388 -105)">';
for(let k=0;k<15;k++){const y=Math.round(121+32.14*k);s+=rect(1388,y,4,1,'#fff')+tx(1393,y+4,(1.3454-k*.0002).toFixed(5),'#fff','start');}
s+=rect(1390,127,39,11,'#ff0')+tx(1393,136,'1.34533','#2f4f4f','start');
document.getElementById('prices').innerHTML=s+'</g>';

s='<g shape-rendering="crispEdges" transform="translate(-142 -604)">';
for(let k=0;k<20;k++){const m=480+20*k,t=k?String(m/60|0).padStart(2,'0')+':'+String(m%60).padStart(2,'0'):'2025';
  s+=rect(142+64*k,604,1,4,'#fff')+tx(141+64*k,616,'8 Aug '+t,'#fff','start');}
for(const [x,t] of [[311,'09:05'],[407,'09:35']]) s+=rect(x,608,78,11,'#000')+tx(x+3,617,'2025.08.08 '+t,'#2f4f4f','start');
document.getElementById('times').innerHTML=s+'</g>';

// Navigator tree: c = open chevron, > = closed, v = guide, t = branch, e = last branch, . = blank
const icon={
 mt:'<svg width="15" height="15" viewBox="0 0 15 15" stroke="none" style="margin-left:1px"><path d="M0 2l4-2 5 4-4 3z" fill="#1593e6"/><path d="M0 3l5 4v4Q0 9 0 3z" fill="#0b6fd6"/><path d="M8 1h7l-2 4-3 2z" fill="#ffc91f"/><path d="M13 5v6l-6 4V9z" fill="#19a83b"/></svg>',
 acc:'<svg width="16" height="15" viewBox="0 0 16 15" stroke="#1a6fb0"><circle cx="10" cy="4" r="3" fill="#cfe9fd"/><path d="M5 14q0-5 5-5t5 5z" fill="#cfe9fd"/><circle cx="4.500" cy="5" r="2.500" fill="#cfe9fd"/><path d="M.5 13.500q0-4.500 4-4.500t4 4.500z" fill="#cfe9fd"/></svg>',
 srv:'<svg width="15" height="11" viewBox="0 0 15 11" stroke="#00a81c"><rect x=".5" y=".5" width="13" height="5" fill="#d6ffd8"/><path d="M3 3h2M10 3h1M7 6v2M0 9h5M9 9h5"/><circle cx="7" cy="9" r="1.500"/></svg>',
 usr:'<svg width="13" height="15" viewBox="0 0 13 15" stroke="#00a81c" style="margin-left:1px"><circle cx="6.500" cy="4" r="3" fill="#d6ffd8"/><path d="M1 14v-2q0-3 3-3h5q3 0 3 3v2z" fill="#d6ffd8"/></svg>',
 ind:'<svg width="16" height="12" viewBox="0 0 16 12" stroke="#1a6fb0"><path d="M0 10q3 0 4-4t3-4 2 4 3 1 2-5"/><path d="M2 9l5-5 4 4 4-6" stroke="#00a81c"/></svg>',
 exp:'<svg width="16" height="14" viewBox="0 0 16 14" stroke="#1a6fb0"><path d="M8 1l7 3.500L8 8 1 4.500z" fill="#8cc8f5"/><path d="M4 6v5q4 3 8 0V6M1.500 5v6" /></svg>'};
const chev={c:'<svg width="9" height="6" viewBox="0 0 9 6" stroke="#222" stroke-width="1.600" style="position:absolute;left:5px;top:8px"><path d="M.5.5l4 4 4-4"/></svg>',
 '>':'<svg width="6" height="9" viewBox="0 0 6 9" stroke="#888" stroke-width="1.400" style="position:absolute;left:7px;top:6px"><path d="M.5.5l4 4-4 4"/></svg>'};
document.getElementById('tree').innerHTML=[['','mt','MetaTrader 5'],['c','acc','Accounts'],['vc','srv','TradersGlobal'],['vvt','usr','30075'],['vve','usr','30077'],['vc','srv','<b>OANDA-Demo-1</b>'],['vve','usr','<b>9616831</b>'],['vc','srv','FivePercent'],['v.e','usr','25621'],['>','ind','Indicators'],['>','exp','Expert Advisors']]
 .map(([g,i,t])=>`<div class="node d-flex align-items-center">${[...g].map(c=>`<span class="cell ${/[vte]/.test(c)?c:chev[c]?'k':''}">${chev[c]||''}</span>`).join('')}<span class="slot">${icon[i]}</span>${t}</div>`).join('');
</script>
</body>
</html>
